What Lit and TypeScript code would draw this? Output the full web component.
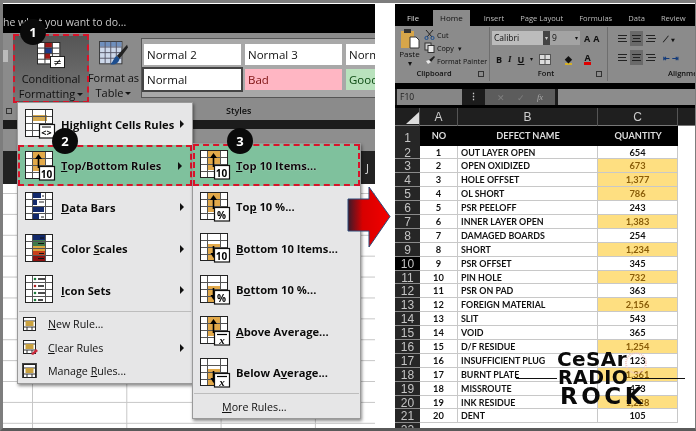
import {css, html, LitElement, svg, nothing} from "lit";
import {customElement} from "lit/decorators.js";

const AMBER = "#e2a94a";

// small "x bar" / "10" / "%" badge in the corner of a menu icon
function badge(kind: string) {
  if (!kind) return nothing;
  let label = svg`<text x="21.5" y="26.5" text-anchor="middle" font-size="10" font-family="Open Sans" fill="#000">${kind}</text>`;
  if (kind === "x") {
    label = svg`<path d="M17 18.5h10" stroke="#000" stroke-width="1.2"/><text x="22" y="27.5" text-anchor="middle" font-size="11" font-style="italic" font-family="Liberation Serif" fill="#000">x</text>`;
  }
  if (kind === "<>") {
    label = svg`<path d="M17 18h9" stroke="#000"/><text x="21.5" y="27" text-anchor="middle" font-size="9" font-weight="700" font-family="Open Sans" fill="#000">&lt;&gt;</text>`;
  }
  return svg`<rect x="14.5" y="15.5" width="15" height="13.5" fill="#fff" stroke="#111" stroke-width="1.2"/>${label}`;
}

function gridLines() {
  return svg`<path d="M7.5 .5v27M20.5 .5v27M.5 7.5h27M.5 14.5h27M.5 21.5h27" stroke="#555" fill="none"/><rect x=".5" y=".5" width="27" height="27" fill="none" stroke="#222"/>`;
}

function menuIcon(kind: string, mark: string) {
  let body = svg``;
  if (kind === "highlight") body = svg`<rect x="7" y="6" width="15" height="6" fill="#d5a94f"/>`;
  if (kind === "up") {
    body = svg`<rect x="7" y="0" width="14" height="20" fill="${AMBER}"/>`;
  }
  if (kind === "down") {
    body = svg`<rect x="7" y="11" width="14" height="17" fill="${AMBER}"/>`;
  }
  if (kind === "bars") {
    body = svg`<rect x="7" y="1" width="9" height="5" fill="#12296b"/><rect x="7" y="7" width="5" height="6" fill="#12296b"/><rect x="7" y="14" width="12" height="6" fill="#12296b"/><rect x="7" y="21" width="7" height="6" fill="#12296b"/><path d="M17 4h2M14 10h5M16 25h3" stroke="#222"/>`;
  }
  if (kind === "scales") {
    body = svg`<rect x="7" y="1" width="14" height="5" fill="#12296b"/><rect x="7" y="6" width="14" height="6" fill="#3f7a4a"/><rect x="7" y="12" width="14" height="5" fill="#d9a640"/><rect x="7" y="17" width="14" height="5" fill="#c8401a"/><rect x="7" y="22" width="14" height="5" fill="#8c1210"/><path d="M15 4h4M13 9.5h6M12 14.5h7M14 19.5h5M13 24.5h6" stroke="#111"/>`;
  }
  if (kind === "sets") {
    body = svg`<circle cx="10" cy="4" r="1.3" fill="#1a7a3a"/><circle cx="10" cy="11" r="1.3" fill="#b02020"/><circle cx="10" cy="18" r="1.3" fill="#1a7a3a"/><circle cx="10" cy="25" r="1.3" fill="#1a7a3a"/><path d="M13 4h7M13 11h6M13 18h7M13 25h5" stroke="#111" stroke-width="1.4"/>`;
  }
  const arrow = kind === "up"
    ? svg`<path d="M13.5 17V6" stroke="#000" stroke-width="1.6"/><path d="M10 8l3.5-5 3.5 5z" fill="#000"/>`
    : kind === "down"
      ? svg`<path d="M13.5 13v9" stroke="#000" stroke-width="1.6"/><path d="M10.5 20l3 5 3-5z" fill="#000"/>`
      : nothing;
  return html`<svg class="mi" width="32" height="30" viewBox="0 0 32 30">
    <rect x=".5" y=".5" width="27" height="27" fill="#fff"/>
    ${body}${gridLines()}${arrow}${badge(mark)}
  </svg>`;
}

function smallIcon(kind: string) {
  return html`<svg class="si" width="18" height="17" viewBox="0 0 18 17">
    ${kind === "manage" ? svg`<rect x="0" y="0" width="15" height="15" fill="#444"/>` : nothing}
    <rect x="1.5" y="1.5" width="12" height="13" fill="#fff" stroke="#222"/>
    <path d="M1.5 5h12M1.5 11h12M5 11v3.5M10 11v3.5" stroke="#333"/>
    <rect x="3.5" y="5" width="8" height="5" fill="#c9a13f"/>
    ${kind === "clear" ? svg`<path d="M9 15l5-5 2 2-5 4z" fill="#c9283a"/>` : nothing}
  </svg>`;
}

interface MenuEntry {
  icon: string;
  mark?: string;
  label: unknown;
  sub?: boolean;
  hot?: boolean;
}

const MENU_ONE: MenuEntry[] = [
  {icon: "highlight", mark: "<>", label: html`Highlight Cells Rules`, sub: true},
  {icon: "up", mark: "10", label: html`<u>T</u>op/Bottom Rules`, sub: true, hot: true},
  {icon: "bars", label: html`<u>D</u>ata Bars`, sub: true},
  {icon: "scales", label: html`Color <u>S</u>cales`, sub: true},
  {icon: "sets", label: html`<u>I</u>con Sets`, sub: true},
];

const MENU_TWO: MenuEntry[] = [
  {icon: "up", mark: "10", label: html`<u>T</u>op 10 Items...`, hot: true},
  {icon: "up", mark: "%", label: html`To<u>p</u> 10 %...`},
  {icon: "down", mark: "10", label: html`<u>B</u>ottom 10 Items...`},
  {icon: "down", mark: "%", label: html`B<u>o</u>ttom 10 %...`},
  {icon: "up", mark: "x", label: html`<u>A</u>bove Average...`},
  {icon: "down", mark: "x", label: html`Below A<u>v</u>erage...`},
];

// defect, quantity, highlighted
const ROWS: [string, string, boolean][] = [
  ["OUT LAYER OPEN", "654", false],
  ["OPEN OXIDIZED", "673", true],
  ["HOLE OFFSET", "1,377", true],
  ["OL SHORT", "786", true],
  ["PSR PEELOFF", "243", false],
  ["INNER LAYER OPEN", "1,383", true],
  ["DAMAGED BOARDS", "254", false],
  ["SHORT", "1,234", true],
  ["PSR OFFSET", "345", false],
  ["PIN HOLE", "732", true],
  ["PSR ON PAD", "363", false],
  ["FOREIGN MATERIAL", "2,156", true],
  ["SLIT", "543", false],
  ["VOID", "365", false],
  ["D/F RESIDUE", "1,254", true],
  ["INSUFFICIENT PLUG", "123", false],
  ["BURNT PLATE", "1,361", true],
  ["MISSROUTE", "473", false],
  ["INK RESIDUE", "1,228", true],
  ["DENT", "105", false],
];

@customElement("app-root")
export class AppRoot extends LitElement {
  static styles = css`
    :host {
      display: block;
      position: relative;
      width: 696px;
      height: 431px;
      overflow: hidden;
      background: #fff;
      font-family: "Open Sans", sans-serif;
      filter: blur(0.3px);
    }

    .frame {
      display: flex;
      box-sizing: border-box;
      height: 431px;
      border: solid #7d7d7d;
      border-width: 3px 1px 3px 3px;
      border-bottom-color: #5a5a5a;
      background: #fff;
      padding-top: 1px;
    }

    /* ---------- left screenshot ---------- */
    .left {
      width: 372px;
      display: flex;
      flex-direction: column;
      flex: none;
    }

    .search {
      height: 29px;
      background: #000;
      color: #c8c8c8;
      font-size: 10.5px;
      line-height: 36px;
      white-space: nowrap;
      overflow: hidden;
    }

    .ribbon {
      height: 87px;
      background: #8b8b8b;
      color: #000;
    }

    .ribbon-main {
      display: flex;
      height: 67px;
    }

    .stub {
      width: 5px;
      height: 12px;
      margin: 17px 5px 0 0;
      background: #bbb;
      flex: none;
    }

    .cond {
      box-sizing: border-box;
      width: 76px;
      height: 69px;
      margin-top: 1px;
      background: linear-gradient(#555, #777);
      border: 2px dashed #d8142a;
      flex: none;
      display: flex;
      flex-direction: column;
      align-items: center;
      padding-top: 6px;
    }

    .fmt {
      width: 49px;
      flex: none;
      display: flex;
      flex-direction: column;
      align-items: center;
      padding-top: 8px;
    }

    .big-label {
      font-size: 11px;
      line-height: 15px;
      text-align: center;
      white-space: nowrap;
      color: #111;
    }

    .big-label.lead { margin-top: 2px; }

    .caret {
      display: inline-block;
      border: 3px solid transparent;
      border-top: 3px solid #111;
      border-bottom: 0;
      vertical-align: 2px;
      margin-left: 2px;
    }

    .gallery {
      flex: 1;
      box-sizing: border-box;
      height: 60px;
      margin: 5px 0 0 3px;
      background: #a8a8a8;
      border: 1px solid #555;
      border-right: 0;
      overflow: hidden;
      display: grid;
      grid-template-columns: 97px 97px 97px;
      grid-auto-rows: 21px;
      gap: 4px;
      padding: 5px 0 0 2px;
    }

    .style-cell {
      background: #fff;
      font-size: 11.5px;
      line-height: 21px;
      padding-left: 3px;
      color: #111;
    }

    .style-cell.current { outline: 2px solid #444; outline-offset: 0; }
    .style-cell.bad { background: #ffb6c3; color: #7d1010; }
    .style-cell.good { background: #b9e2bd; color: #0c4a12; }

    .ribbon-foot {
      display: flex;
      height: 21px;
      align-items: center;
      font-size: 9px;
      font-weight: 600;
      color: #111;
      padding-left: 3px;
    }

    .launcher {
      width: 6px;
      height: 6px;
      border: 1px solid #333;
      box-sizing: border-box;
    }

    .foot-sep {
      width: 1px;
      height: 18px;
      background: #666;
      margin: 0 207px 0 6px;
    }

    .black-band { height: 9px; background: #1c1c1c; }
    .grey-band { height: 22px; background: #8e8e8e; }

    .col-bar {
      height: 33px;
      background: #222;
      color: #ddd;
      font-size: 11px;
      display: flex;
      justify-content: flex-end;
      align-items: center;
      padding-right: 6px;
    }

    .sheet {
      flex: 1;
      background-color: #fff;
      background-image:
        linear-gradient(#c6c6c6 1px, transparent 1px),
        linear-gradient(90deg, #c6c6c6 1px, transparent 1px);
      background-size: 94.3px 20.9px;
      background-position: 29px 9px;
    }

    /* ---------- drop-down menus ---------- */
    .menu {
      position: absolute;
      box-sizing: border-box;
      background: #e6e6e7;
      border: 1px solid #9a9a9a;
      box-shadow: 1px 2px 3px rgba(0, 0, 0, 0.45);
      display: flex;
      flex-direction: column;
    }

    .menu.one { left: 17px; top: 102px; width: 176px; height: 282px; }
    .menu.two { left: 192px; top: 143px; width: 169px; height: 276px; }

    .item {
      box-sizing: border-box;
      height: 41.5px;
      flex: none;
      display: flex;
      align-items: center;
      padding: 1px 0 0 7px;
      font-size: 11.2px;
      font-weight: 700;
      color: #0a0a0a;
      text-shadow: 0 0 1px #fff;
      white-space: nowrap;
    }

    .item.hot {
      background: #7fc19d;
      border: 2px dashed #d8142a;
      padding-left: 5px;
    }

    .mi { flex: none; margin-right: 4px; }

    .item .label { flex: 1; }

    .more {
      width: 0;
      height: 0;
      border: 4px solid transparent;
      border-left: 4px solid #111;
      border-right: 0;
      margin-right: 8px;
    }

    .sep { height: 1px; background: #bdbdbd; margin: 0 1px 1px; flex: none; }

    .plain {
      box-sizing: border-box;
      height: 23.5px;
      flex: none;
      display: flex;
      align-items: center;
      padding-left: 4px;
      font-size: 10.7px;
      color: #111;
      white-space: nowrap;
    }

    .plain .si { margin-right: 8px; flex: none; }
    .plain .label { flex: 1; }
    .menu.two .plain { padding-left: 29px; height: 24px; }

    .step {
      position: absolute;
      width: 26px;
      height: 26px;
      border-radius: 50%;
      background: #0a0a0a;
      color: #fff;
      font-size: 13px;
      font-weight: 700;
      text-align: center;
      line-height: 26px;
    }

    .step.one { left: 20px; top: 19px; }
    .step.two { left: 52px; top: 128px; }
    .step.three { left: 227px; top: 128px; }

    .arrow { position: absolute; left: 347px; top: 186px; }

    /* ---------- right screenshot ---------- */
    .right {
      margin-left: 20px;
      flex: 1;
      display: flex;
      flex-direction: column;
      background: #000;
      color: #ddd;
      min-width: 0;
      overflow: hidden;
    }

    .tabs {
      height: 22px;
      display: flex;
      align-items: flex-end;
      font-size: 7.6px;
      padding-left: 7px;
      white-space: nowrap;
      flex: none;
    }

    .tab { padding: 0 8px; line-height: 16px; color: #bbb; }
    .tab.on { background: #8b8b8b; color: #111; padding: 0 7px; margin: 0 6px 0 4px; font-size: 8px; }
    .tab.first { color: #ddd; padding: 0 10px 0 5px; }

    .rb {
      height: 57px;
      background: #8b8b8b;
      display: flex;
      color: #111;
      flex: none;
      overflow: hidden;
    }

    .group {
      flex: none;
      box-sizing: border-box;
      border-right: 1px solid #6e6e6e;
      display: flex;
      flex-direction: column;
      height: 54px;
      margin-top: 1px;
      position: relative;
    }

    .group-body { flex: 1; display: flex; min-height: 0; }

    .group-name {
      height: 14px;
      font-size: 7.5px;
      font-weight: 600;
      line-height: 13px;
      text-align: center;
      flex: none;
      white-space: nowrap;
    }

    .group-launch {
      position: absolute;
      right: 5px;
      bottom: 4px;
      width: 4px;
      height: 4px;
      border: 1px solid #333;
    }

    .clip { width: 95px; }
    .font { width: 118px; }
    .align { flex: 1; border: 0; }
    .align .group-name { text-align: left; padding-left: 60px; }

    .paste {
      width: 29px;
      flex: none;
      display: flex;
      flex-direction: column;
      align-items: center;
      font-size: 8px;
      line-height: 9px;
      padding-top: 1px;
    }

    .clip-list {
      display: flex;
      flex-direction: column;
      font-size: 7.2px;
      padding-top: 1px;
      white-space: nowrap;
    }

    .clip-row { display: flex; align-items: center; gap: 2px; height: 15px; }

    .font-rows { padding: 4px 0 0 2px; display: flex; flex-direction: column; gap: 6px; }

    .font-top { display: flex; align-items: center; height: 14px; font-size: 8.5px; }
    .font-name { width: 51px; height: 14px; background: #bcbcbc; line-height: 14px; padding-left: 2px; box-sizing: border-box; }
    .font-btn { width: 7px; height: 14px; background: #444; color: #ccc; font-size: 6px; line-height: 14px; text-align: center; }
    .font-size { width: 30px; height: 14px; background: #a3a3a3; line-height: 14px; padding: 0 2px; box-sizing: border-box; margin-right: 4px; display: flex; justify-content: space-between; }
    .font-size small { font-size: 6px; }
    .grow { font-size: 9px; font-weight: 700; margin-right: 3px; }

    .font-bot { display: flex; align-items: center; height: 16px; font-size: 9px; font-weight: 700; gap: 6px; padding-left: 4px; }
    .dd { font-weight: 400; font-size: 6px; }
    .under-y { border-bottom: 2px solid #d4b02a; line-height: 9px; margin-left: 8px; }
    .under-r { border-bottom: 3px solid #e00000; line-height: 9px; margin-left: 6px; }

    .align-rows { display: flex; flex-direction: column; gap: 4px; padding: 4px 0 0 8px; }
    .align-row { display: flex; gap: 1px; align-items: center; height: 15px; }
    .al { width: 13px; height: 15px; display: flex; align-items: center; justify-content: center; }
    .al.on { background: #6a6a6a; }
    .al-extra { margin-left: 5px; font-size: 8px; font-weight: 700; }
    .al-extra.blue { color: #123a7a; }

    .fbar-gap { height: 6px; flex: none; }

    .fbar {
      height: 16px;
      display: flex;
      gap: 3px;
      background: #1c1c1c;
      padding-left: 2px;
      font-size: 8.5px;
      color: #222;
      flex: none;
    }

    .name-box {
      width: 65px;
      background: #868686;
      line-height: 16px;
      padding-left: 3px;
      box-sizing: border-box;
      flex: none;
    }

    .colon { width: 17px; text-align: center; color: #ccc; font-weight: 700; line-height: 15px; flex: none; }

    .fx {
      width: 70px;
      background: #5c5c5c;
      color: #7f7f7f;
      display: flex;
      justify-content: space-around;
      align-items: center;
      flex: none;
      box-sizing: border-box;
      padding: 0 6px;
    }

    .fx i { font-family: "Liberation Serif", serif; color: #aaa; }
    .formula { flex: 1; background: #8c8c8c; }

    .heads {
      box-sizing: border-box;
      height: 18px;
      margin-top: 3px;
      display: grid;
      grid-template-columns: 25px 38px 140px 80px 1fr;
      background: #1f1f1f;
      font: 12px "Liberation Sans", sans-serif;
      color: #ccc;
      line-height: 18px;
      text-align: center;
      border-bottom: 1px solid #777;
      flex: none;
    }

    .heads > div { border-right: 1px solid #555; }
    .heads > div:last-child { border-right: 0; }
    .corner svg { display: block; }

    .table {
      flex: 1;
      display: grid;
      grid-template-columns: 25px 38px 140px 80px 1fr;
      grid-template-rows: 19.5px;
      grid-auto-rows: 13.9px;
      background: #fff;
      font-family: Lato, sans-serif;
      color: #111;
      overflow: hidden;
    }

    .row-no {
      background: #262626;
      color: #c4c4c4;
      font: 12px "Liberation Sans", sans-serif;
      text-align: center;
      line-height: 14px;
      border-bottom: 1px solid #8a8a8a;
      box-sizing: border-box;
    }

    .row-no.sel { background: #000; }
    .row-no.top { line-height: 24px; border-bottom: 0; }

    .cell {
      box-sizing: border-box;
      border-right: 1px solid #c8c8c8;
      border-bottom: 1px solid #c8c8c8;
      line-height: 13px;
      white-space: nowrap;
      font-size: 8.9px;
      font-weight: 700;
    }

    .cell.no, .cell.qty { text-align: center; font-size: 9.3px; }
    .cell.name { padding-left: 3px; }
    .cell.warn { background: #fedf81; color: #8a5d08; }
    .cell.blank { border-right: 0; border-bottom: 0; }

    .cell.head {
      background: #000;
      color: #ddd;
      font-size: 9.2px;
      text-align: center;
      line-height: 19px;
      border: 0;
    }

    /* ---------- watermark ---------- */
    .mark {
      position: absolute;
      left: 557px;
      top: 349px;
      color: #0a0a0a;
      font: 700 20px "DejaVu Sans", sans-serif;
      pointer-events: none;
    }

    .mark span { display: block; white-space: nowrap; }
    .mark .l1 { font-size: 20px; letter-spacing: .4px; line-height: 20px; }
    .mark .l2 { font-size: 19px; letter-spacing: .4px; line-height: 16px; margin-left: 1px; }
    .mark .l3 { font-size: 23px; letter-spacing: 3.5px; line-height: 20px; margin: 1px 0 0 3px; }

    .rule { position: absolute; height: 1px; background: #111; top: 378px; }
    .rule.a { left: 516px; width: 41px; }
    .rule.b { left: 632px; width: 53px; }
    .seal { position: absolute; left: 624px; top: 351px; }
  `;

  private renderEntry(e: MenuEntry) {
    return html`<div class="item ${e.hot ? "hot" : ""}">
      ${menuIcon(e.icon, e.mark ?? "")}
      <span class="label">${e.label}</span>
      ${e.sub ? html`<span class="more"></span>` : nothing}
    </div>`;
  }

  private renderLeft() {
    return html`<div class="left">
      <div class="search">he what you want to do...</div>
      <div class="ribbon">
        <div class="ribbon-main">
          <span class="stub"></span>
          <div class="cond">
            <svg width="30" height="29" viewBox="0 0 30 29">
              <rect x=".5" y=".5" width="24" height="23" fill="#fff" stroke="#222"/>
              <rect x="8" y="1" width="8" height="5" fill="#a01818"/>
              <rect x="8" y="6" width="8" height="6" fill="#1b3a8a"/>
              <rect x="8" y="12" width="6" height="6" fill="#a01818"/>
              <path d="M8.5 1v22M16.5 1v22M1 6.5h23M1 12.5h23M1 18.5h23" stroke="#333" fill="none"/>
              <rect x="14.5" y="15.5" width="15" height="12" fill="#fff" stroke="#111"/>
              <text x="22" y="26" text-anchor="middle" font-size="11" font-family="DejaVu Sans" fill="#000">≠</text>
            </svg>
            <div class="big-label lead">Conditional</div>
            <div class="big-label">Formatting<span class="caret"></span></div>
          </div>
          <div class="fmt">
            <svg width="32" height="29" viewBox="0 0 32 29">
              <rect x=".5" y=".5" width="24" height="24" fill="#cdd8ea" stroke="#333"/>
              <rect x="1" y="1" width="23" height="5" fill="#6f8fbd"/>
              <path d="M6.5 1v23M12.5 1v23M18.5 1v23M1 6.5h23M1 12.5h23M1 18.5h23" stroke="#556" fill="none"/>
              <path d="M30 4L19 16l3 3L31 7z" fill="#222"/>
              <path d="M19 16c-3 1-3 5-7 9 5 1 9-1 10-6z" fill="#1d4e8f"/>
            </svg>
            <div class="big-label lead">Format as</div>
            <div class="big-label">Table<span class="caret"></span></div>
          </div>
          <div class="gallery">
            <div class="style-cell">Normal 2</div>
            <div class="style-cell">Normal 3</div>
            <div class="style-cell">Normal 4</div>
            <div class="style-cell current">Normal</div>
            <div class="style-cell bad">Bad</div>
            <div class="style-cell good">Good</div>
          </div>
        </div>
        <div class="ribbon-foot">
          <span class="launcher"></span>
          <span class="foot-sep"></span>
          <span>Styles</span>
        </div>
      </div>
      <div class="black-band"></div>
      <div class="grey-band"></div>
      <div class="col-bar">J</div>
      <div class="sheet"></div>
    </div>`;
  }

  private renderRibbon() {
    return html`<div class="rb">
      <div class="group clip">
        <div class="group-body">
          <div class="paste">
            <svg width="21" height="21" viewBox="0 0 21 21">
              <rect x="2" y="3" width="13" height="17" fill="#d7a64a"/>
              <rect x="5" y="1" width="7" height="4" fill="#333"/>
              <path d="M11 9h6l3 3v8h-9z" fill="#fff" stroke="#333"/>
            </svg>
            <span>Paste</span>
            <span>▾</span>
          </div>
          <div class="clip-list">
            <div class="clip-row">
              <svg width="11" height="11" viewBox="0 0 11 11"><path d="M2 1l6 7M9 1L3 8" stroke="#222" fill="none"/><circle cx="2.5" cy="9" r="1.6" fill="none" stroke="#1d4e8f"/><circle cx="8.5" cy="9" r="1.6" fill="none" stroke="#1d4e8f"/></svg>
              <span>Cut</span>
            </div>
            <div class="clip-row">
              <svg width="11" height="11" viewBox="0 0 11 11"><rect x="1" y="1" width="6" height="7" fill="#ccc" stroke="#333"/><rect x="4" y="3.5" width="6" height="7" fill="#eee" stroke="#333"/></svg>
              <span>Copy&nbsp; ▾</span>
            </div>
            <div class="clip-row">
              <svg width="11" height="11" viewBox="0 0 11 11"><path d="M5 5l5-4 1 1-4 5z" fill="#222"/><path d="M5 5L2 6l2 3 3-2z" fill="#e8e8e8"/></svg>
              <span>Format Painter</span>
            </div>
          </div>
        </div>
        <div class="group-name" style="padding-right:16px">Clipboard</div>
        <span class="group-launch"></span>
      </div>
      <div class="group font">
        <div class="group-body">
          <div class="font-rows">
            <div class="font-top">
              <span class="font-name">Calibri</span>
              <span class="font-btn">▾</span>
              <span class="font-size">9<small>▾</small></span>
              <span class="grow">A</span><span class="grow">A</span>
            </div>
            <div class="font-bot">
              <span>B</span><i style="font-family:'Liberation Serif'">I</i><u>U</u>
              <span class="dd">▾</span>
              <svg width="12" height="11" viewBox="0 0 12 11"><rect x=".5" y=".5" width="11" height="10" fill="#ddd" stroke="#555"/><path d="M6 1v9M1 5.5h10" stroke="#555"/></svg>
              <span class="under-y">◆</span>
              <span class="under-r">A</span>
            </div>
          </div>
        </div>
        <div class="group-name" style="padding-right:5px">Font</div>
        <span class="group-launch"></span>
      </div>
      <div class="group align">
        <div class="group-body">
          <div class="align-rows">
            ${[0, 1].map((row) => html`<div class="align-row">
              ${[0, 1, 2].map((i) => html`<div class="al ${i === 1 ? "on" : ""}">
                <svg width="11" height="9" viewBox="0 0 11 9">
                  <path d="M1 1.5h9M${i === 0 ? 1 : i === 1 ? 2 : 3} 4.5h${i === 1 ? 7 : 8}M1 7.5h9" stroke="#222" fill="none"/>
                </svg>
              </div>`)}
              ${row === 0
                ? html`<span class="al-extra">⟋ ▾</span>`
                : html`<span class="al-extra blue">⇤ ⇥</span>`}
            </div>`)}
          </div>
        </div>
        <div class="group-name">Alignment</div>
      </div>
    </div>`;
  }

  private renderRight() {
    return html`<div class="right">
      <div class="tabs">
        <span class="tab first">File</span>
        <span class="tab on">Home</span>
        <span class="tab">Insert</span>
        <span class="tab">Page Layout</span>
        <span class="tab">Formulas</span>
        <span class="tab">Data</span>
        <span class="tab">Review</span>
        <span class="tab">View</span>
      </div>
      ${this.renderRibbon()}
      <div class="fbar-gap"></div>
      <div class="fbar">
        <div class="name-box">F10</div>
        <div class="colon">⋮</div>
        <div class="fx"><span>✕</span><span>✓</span><i>fx</i></div>
        <div class="formula"></div>
      </div>
      <div class="heads">
        <div class="corner"><svg width="24" height="17" viewBox="0 0 24 17"><path d="M11 16L24 4v12z" fill="#ddd"/></svg></div>
        <div>A</div><div>B</div><div>C</div><div></div>
      </div>
      <div class="table">
        <div class="row-no top">1</div>
        <div class="cell head">NO</div>
        <div class="cell head">DEFECT NAME</div>
        <div class="cell head">QUANTITY</div>
        <div class="cell blank"></div>
        ${ROWS.map((r, i) => html`
          <div class="row-no ${i === 8 ? "sel" : ""}">${i + 2}</div>
          <div class="cell no">${i + 1}</div>
          <div class="cell name">${r[0]}</div>
          <div class="cell qty ${r[2] ? "warn" : ""}">${r[1]}</div>
          <div class="cell blank"></div>
        `)}
        <div class="row-no">22</div>
      </div>
    </div>`;
  }

  render() {
    return html`
      <div class="frame">
        ${this.renderLeft()}
        ${this.renderRight()}
      </div>

      <div class="menu one">
        ${MENU_ONE.map((e) => this.renderEntry(e))}
        <div class="sep"></div>
        <div class="plain">${smallIcon("new")}<span class="label"><u>N</u>ew Rule...</span></div>
        <div class="plain">${smallIcon("clear")}<span class="label"><u>C</u>lear Rules</span><span class="more"></span></div>
        <div class="plain">${smallIcon("manage")}<span class="label">Manage <u>R</u>ules...</span></div>
      </div>

      <div class="menu two">
        ${MENU_TWO.map((e) => this.renderEntry(e))}
        <div class="sep"></div>
        <div class="plain"><span class="label"><u>M</u>ore Rules...</span></div>
      </div>

      <div class="step one">1</div>
      <div class="step two">2</div>
      <div class="step three">3</div>

      <svg class="arrow" width="44" height="62" viewBox="0 0 44 62">
        <defs>
          <linearGradient id="red" x1="0" x2="1" y1="0" y2="0">
            <stop offset="0" stop-color="#3a1a2a"/>
            <stop offset=".35" stop-color="#d80000"/>
            <stop offset="1" stop-color="#f40000"/>
          </linearGradient>
        </defs>
        <path d="M1 13h21V1l21 29.500L22 61V45H1z" fill="url(#red)" stroke="#2c4a78"/>
      </svg>

      <span class="rule a"></span>
      <span class="rule b"></span>
      <svg class="seal" width="24" height="24" viewBox="0 0 24 24">
        <circle cx="12" cy="12" r="10" fill="none" stroke="#f0c8c0" stroke-dasharray="1 1" stroke-width="2"/>
      </svg>
      <div class="mark">
        <span class="l1">CeSAr</span>
        <span class="l2">RADIO</span>
        <span class="l3">ROCK</span>
      </div>
    `;
  }
}
